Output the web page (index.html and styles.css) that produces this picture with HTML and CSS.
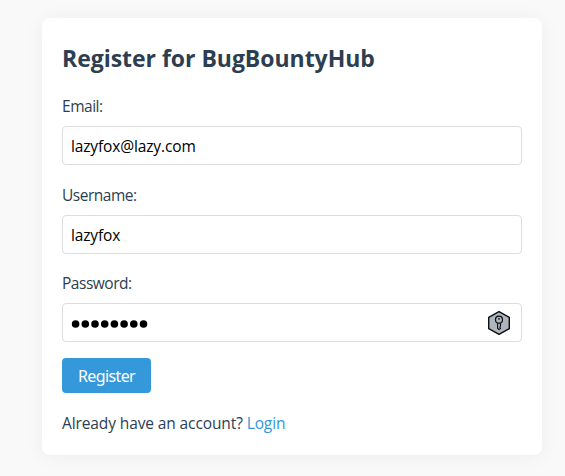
FILE: index.html
```html
<!DOCTYPE html>
<html lang="en">
<head>
<meta charset="utf-8">
<title>Register for BugBountyHub</title>
<link rel="stylesheet" href="styles.css">
</head>
<body>
<main class="card">
  <h2 class="title">Register for BugBountyHub</h2>
  <form>
    <label class="label" for="email">Email:</label>
    <input class="field" id="email" type="text" value="lazyfox@lazy.com">
    <label class="label" for="username">Username:</label>
    <input class="field username" id="username" type="text" value="lazyfox">
    <label class="label">Password:</label>
    <div class="field password">
      <svg class="dots" width="80" height="12" viewBox="0 0 80 12" aria-hidden="true">
        <g fill="#000"><circle cx="4.6" cy="7" r="3.8"/><circle cx="14.3" cy="7" r="3.8"/><circle cx="24" cy="7" r="3.8"/><circle cx="33.7" cy="7" r="3.8"/><circle cx="43.4" cy="7" r="3.8"/><circle cx="53.1" cy="7" r="3.8"/><circle cx="62.8" cy="7" r="3.8"/><circle cx="72.5" cy="7" r="3.8"/></g>
      </svg>
      <svg class="key" width="24" height="26" viewBox="0 0 24 26" aria-hidden="true">
        <path d="M12 1.6 22.3 7.3V18.7L12 24.4 1.7 18.7V7.3Z" fill="#afb5be" stroke="#0b0d10" stroke-width="1.4" stroke-linejoin="round"/>
        <circle cx="12" cy="9.7" r="3.5" fill="none" stroke="#0b0d10" stroke-width="1.2"/>
        <circle cx="12" cy="8.8" r=".9" fill="#0b0d10"/>
        <path d="M10.6 12.9V18.2L12 19.6 13.5 18.3 12.8 17.2 13.5 16.2V12.9" fill="none" stroke="#0b0d10" stroke-width="1.1"/>
      </svg>
    </div>
    <button class="submit" type="button">Register</button>
  </form>
  <p class="login">Already have an account? <a href="#">Login</a></p>
</main>
</body>
</html>
```
FILE: styles.css
```css
* { box-sizing: border-box; }
body {
  margin: 0;
  height: 476px;
  overflow: hidden;
  padding: 18px 23px 0 42px;
  background: #f9f9f9;
  color: #2c3e50;
  font: 15.5px/24px "Open Sans", "Noto Sans", sans-serif;
}
.card {
  width: 500px;
  height: 437px;
  padding: 20px;
  background: #fff;
  border-radius: 8px;
  box-shadow: 0 2px 20px rgba(0, 0, 0, .05);
}
.title {
  margin: 0 0 16px;
  font-size: 23px;
  line-height: 40px;
  font-weight: 700;
  letter-spacing: -.03px;
  white-space: nowrap;
}
form { display: flex; flex-direction: column; align-items: flex-start; }
.label { height: 24px; margin-bottom: 8px; letter-spacing: -.48px; }
.field {
  width: 460px;
  height: 39px;
  margin: 0 0 18px;
  padding: 0 8px;
  border: 1px solid #ddd;
  border-radius: 4px;
  background: #fff;
  color: #000;
  font: inherit;
  letter-spacing: -.14px;
  outline: 0;
}
.username { margin-bottom: 17px; }
.password {
  display: flex;
  align-items: center;
  justify-content: space-between;
  padding-right: 10px;
  margin-bottom: 16px;
}
.submit {
  width: 89px;
  height: 35px;
  padding: 1px 0 0;
  border: 0;
  border-radius: 4px;
  background: #3498db;
  color: #fff;
  font: 16px/34px "Noto Sans", sans-serif;
  letter-spacing: -.6px;
}
.login { margin: 18px 0 0; letter-spacing: -.11px; }
.login a { color: #3498db; text-decoration: none; }
```
